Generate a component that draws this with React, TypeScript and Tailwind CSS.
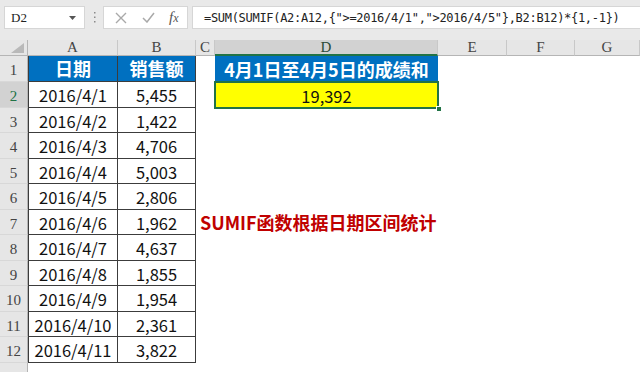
import React from 'react'

const data = [
  ['2016/4/1', '5,455'],
  ['2016/4/2', '1,422'],
  ['2016/4/3', '4,706'],
  ['2016/4/4', '5,003'],
  ['2016/4/5', '2,806'],
  ['2016/4/6', '1,962'],
  ['2016/4/7', '4,637'],
  ['2016/4/8', '1,855'],
  ['2016/4/9', '1,954'],
  ['2016/4/10', '2,361'],
  ['2016/4/11', '3,822'],
]

const formula = '=SUM(SUMIF(A2:A12,{">=2016/4/1",">2016/4/5"},B2:B12)*{1,-1})'

const cjk = "font-['Noto_Sans_CJK_SC',sans-serif]"
const serif = "font-['Liberation_Serif','Noto_Sans_CJK_SC',serif]"

function FormulaBar() {
  return (
    <div className="h-[40px] shrink-0 bg-[#e9e9e9] flex items-start pt-[6px] pl-[4px]">
      <div className="w-[81px] h-[23px] bg-white border border-[#d6d6d6] flex items-center justify-between pl-[6px] pr-[8px]">
        <span className={`${serif} text-[13px] text-[#222]`}>D2</span>
        <svg width="7" height="4" viewBox="0 0 7 4">
          <path d="M0 0 L7 0 L3.5 4 Z" fill="#555" />
        </svg>
      </div>
      <div className="w-[18px] h-[23px] flex items-center justify-center">
        <svg width="3" height="11" viewBox="0 0 3 11">
          <rect x="1" y="0" width="1.5" height="1.5" fill="#8a8a8a" />
          <rect x="1" y="4.5" width="1.5" height="1.5" fill="#8a8a8a" />
          <rect x="1" y="9" width="1.5" height="1.5" fill="#8a8a8a" />
        </svg>
      </div>
      <div className="w-[85px] h-[23px] bg-white border border-[#d6d6d6] flex items-center pl-[11px]">
        <svg width="12" height="12" viewBox="0 0 12 12">
          <path d="M1 1 L11 11 M11 1 L1 11" stroke="#a9a9a9" strokeWidth="1.4" />
        </svg>
        <svg width="13" height="11" viewBox="0 0 13 11" className="ml-[15px]">
          <path d="M1 6 L5 10 L12 1" stroke="#a9a9a9" strokeWidth="1.5" fill="none" />
        </svg>
        <span className={`ml-[14px] ${serif} italic text-[15px] text-[#555] leading-none`}>
          f<span className="text-[12px]">x</span>
        </span>
      </div>
      <div className="flex-1 h-[23px] ml-[4px] bg-white border-y border-l border-[#d6d6d6] flex items-center pl-[11px]">
        <span className="font-['DejaVu_Sans_Mono',monospace] text-[12px] tracking-[-0.3px] text-[#222] whitespace-nowrap">
          {formula}
        </span>
      </div>
    </div>
  )
}

function ColHead({ label, active }: { label: string; active?: boolean }) {
  return (
    <div
      className={`${serif} text-[15px] leading-none flex items-center justify-center border-r border-b border-r-[#c8c8c8] ${
        active ? 'bg-[#d2d2d2] text-[#2c4a38] border-b-[#217346] border-b-2' : 'bg-[#e6e6e6] text-[#444] border-b-[#b5b5b5]'
      }`}
    >
      {label}
    </div>
  )
}

function RowHead({ n, active }: { n: string; active?: boolean }) {
  return (
    <div
      className={`${serif} text-[15px] leading-none flex items-center justify-center pt-[4px] border-r border-r-[#b5b5b5] border-b border-b-[#d8d8d8] ${
        active ? 'bg-[#d2d2d2] text-[#217346]' : 'bg-[#e6e6e6] text-[#444]'
      }`}
    >
      {n}
    </div>
  )
}

const Empty = () => <div className="bg-white" />

export default function App() {
  return (
    <div className="w-[640px] h-[372px] overflow-hidden bg-white flex flex-col">
      <FormulaBar />
      <div className="flex-1 grid grid-cols-[28px_90px_78px_19px_223px_69px_68px_1fr] grid-rows-[16px_26px_26px_25px_26px_25px_26px_25px_26px_25px_26px_25px_26px_1fr]">
        {/* header row */}
        <div className="bg-[#e6e6e6] border-r border-b border-[#b5b5b5] flex items-end justify-end pr-[3px] pb-[2px]">
          <svg width="13" height="10" viewBox="0 0 13 10">
            <path d="M13 0 L13 10 L0 10 Z" fill="#b9b9b9" />
          </svg>
        </div>
        <ColHead label="A" />
        <ColHead label="B" />
        <ColHead label="C" />
        <ColHead label="D" active />
        <ColHead label="E" />
        <ColHead label="F" />
        <ColHead label="G" />

        {/* row 1 */}
        <RowHead n="1" />
        <div className={`${cjk} bg-[#0070c0] text-white font-bold text-[18px] flex items-center justify-center border-l border-r border-b border-[#3c3c3c]`}>
          日期
        </div>
        <div className={`${cjk} bg-[#0070c0] text-white font-bold text-[18px] flex items-center justify-center border-r border-b border-[#3c3c3c]`}>
          销售额
        </div>
        <Empty />
        <div className={`${cjk} bg-[#0070c0] text-white font-bold text-[18px] flex items-center justify-center`}>
          4月1日至4月5日的成绩和
        </div>
        <Empty />
        <Empty />
        <Empty />

        {data.map(([date, amount], i) => (
          <React.Fragment key={date}>
            <RowHead n={String(i + 2)} active={i === 0} />
            <div className={`${cjk} text-[16.5px] text-[#111] flex items-center justify-center pt-[2px] border-l border-r border-b border-[#3c3c3c]`}>
              {date}
            </div>
            <div className={`${cjk} text-[16.5px] text-[#111] flex items-center justify-center pt-[2px] border-r border-b border-[#3c3c3c]`}>
              {amount}
            </div>
            {i === 5 ? (
              <div className="relative z-10 flex items-center pl-[4px] whitespace-nowrap">
                <span className={`${cjk} font-bold text-[18px] text-[#c00000]`}>SUMIF函数根据日期区间统计</span>
              </div>
            ) : (
              <Empty />
            )}
            {i === 0 ? (
              <div className={`relative ${cjk} bg-[#ffff00] text-[16.5px] text-[#111] flex items-center justify-center pt-[2px]`}>
                19,392
                <div className="absolute -inset-[1px] border-2 border-[#217346]" />
                <div className="absolute -right-[4px] -bottom-[4px] w-[6px] h-[6px] bg-[#217346] border border-white" />
              </div>
            ) : (
              <Empty />
            )}
            <Empty />
            <Empty />
            <Empty />
          </React.Fragment>
        ))}

        {/* partial row 13 */}
        <div className="bg-[#e6e6e6] border-r border-[#b5b5b5]" />
        <Empty />
        <Empty />
        <Empty />
        <Empty />
        <Empty />
        <Empty />
        <Empty />
      </div>
    </div>
  )
}
